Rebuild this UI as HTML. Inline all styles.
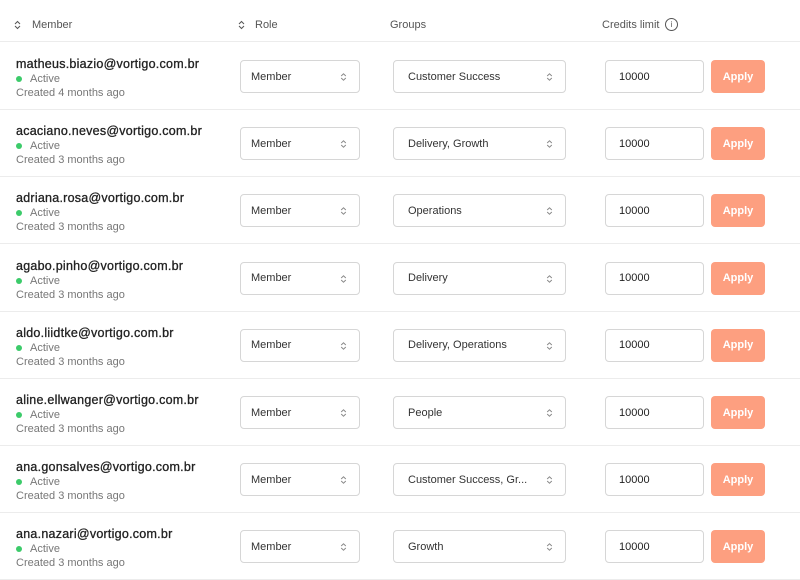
<!DOCTYPE html>
<html><head><style>
*{box-sizing:border-box;margin:0;padding:0}
body{width:800px;height:580px;background:#fff;font-family:"Liberation Sans",sans-serif;overflow:hidden;position:relative}
.hd{position:absolute;top:0;left:0;width:800px;height:42px;border-bottom:1px solid #ececec;font-size:11px;color:#555}
.hd span{position:absolute;top:19px;line-height:13px}
.hd svg{position:absolute}
.row{position:absolute;left:0;width:800px;height:67px;border-bottom:1px solid #ececec}
.em{position:absolute;left:16px;top:14px;font-size:12.5px;color:#222;line-height:15px;-webkit-text-stroke:0.3px #222;letter-spacing:0.25px}
.st{position:absolute;left:30px;top:30px;font-size:11px;color:#777;line-height:13px}
.dot{position:absolute;left:16px;top:33px;width:6px;height:6px;border-radius:50%;background:#3ccb6a}
.cr{position:absolute;left:16px;top:44px;font-size:11px;color:#777;line-height:13px}
.sel{position:absolute;top:17px;height:33px;border:1px solid #d6d6d6;border-radius:4px;font-size:11px;color:#333;display:flex;align-items:center;padding-left:10px}
.sel svg{position:absolute;right:12px;top:11px}
.in{position:absolute;left:605px;top:17px;width:99px;height:33px;border:1px solid #d6d6d6;border-radius:4px;font-size:11px;color:#222;display:flex;align-items:center;padding-left:13px}
.ap{position:absolute;left:711px;top:17px;width:54px;height:33px;border-radius:4px;background:#fd9f80;color:#fff;font-size:11px;font-weight:bold;display:flex;align-items:center;justify-content:center}
</style></head><body>
<div class="hd">
<svg style="left:14px;top:20px" width="7" height="10" viewBox="0 0 7 10"><path d="M1 4L3.5 1.5L6 4M1 6L3.5 8.5L6 6" fill="none" stroke="#555" stroke-width="1"/></svg>
<span style="left:32px">Member</span>
<svg style="left:238px;top:20px" width="7" height="10" viewBox="0 0 7 10"><path d="M1 4L3.5 1.5L6 4M1 6L3.5 8.5L6 6" fill="none" stroke="#555" stroke-width="1"/></svg>
<span style="left:255px">Role</span>
<span style="left:390px">Groups</span>
<span style="left:602px">Credits limit</span>
<span style="left:665px;top:18px;width:13px;height:13px;border:1px solid #555;border-radius:50%;font-size:8px;text-align:center;line-height:11px">i</span>
</div>
<div id="rows"></div>
<script>
var ch='<svg width="7" height="10" viewBox="0 0 7 10"><path d="M1.2 4L3.5 1.8L5.8 4M1.2 6L3.5 8.2L5.8 6" fill="none" stroke="#888" stroke-width="1"/></svg>';
var d=[["matheus.biazio@vortigo.com.br","4","Customer Success"],["acaciano.neves@vortigo.com.br","3","Delivery, Growth"],["adriana.rosa@vortigo.com.br","3","Operations"],["agabo.pinho@vortigo.com.br","3","Delivery"],["aldo.liidtke@vortigo.com.br","3","Delivery, Operations"],["aline.ellwanger@vortigo.com.br","3","People"],["ana.gonsalves@vortigo.com.br","3","Customer Success, Gr..."],["ana.nazari@vortigo.com.br","3","Growth"]];
var h="";d.forEach(function(r,i){var t=43+i*67.2;
h+='<div class="row" style="top:'+t+'px"><div class="em">'+r[0]+'</div><div class="dot"></div><div class="st">Active</div><div class="cr">Created '+r[1]+' months ago</div>'+
'<div class="sel" style="left:240px;width:120px">Member'+ch+'</div>'+
'<div class="sel" style="left:393px;width:173px;padding-left:14px">'+r[2]+ch+'</div>'+
'<div class="in">10000</div><div class="ap">Apply</div></div>';});
document.getElementById("rows").innerHTML=h;
</script>
</body></html>
